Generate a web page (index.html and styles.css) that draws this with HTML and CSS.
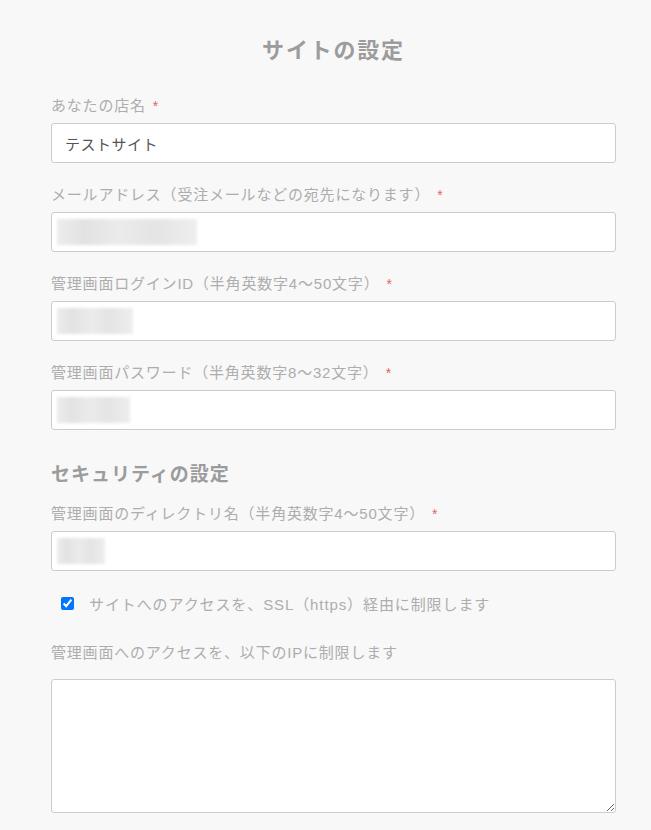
FILE: index.html
```html
<!DOCTYPE html>
<html lang="ja">
<head>
<meta charset="utf-8">
<title>サイトの設定</title>
<link rel="stylesheet" href="styles.css">
</head>
<body>
<main class="page">
  <h1 class="title">サイトの設定</h1>

  <div class="field">
    <label class="label">あなたの店名<span class="req">*</span></label>
    <input class="input" type="text" value="テストサイト">
  </div>

  <div class="field">
    <label class="label">メールアドレス（受注メールなどの宛先になります）<span class="req">*</span></label>
    <div class="input fake"><span class="blur blur-email"></span></div>
  </div>

  <div class="field">
    <label class="label">管理画面ログインID（半角英数字4〜50文字）<span class="req">*</span></label>
    <div class="input fake"><span class="blur blur-id"></span></div>
  </div>

  <div class="field">
    <label class="label">管理画面パスワード（半角英数字8〜32文字）<span class="req">*</span></label>
    <div class="input fake"><span class="blur blur-pw"></span></div>
  </div>

  <h2 class="section">セキュリティの設定</h2>

  <div class="field">
    <label class="label">管理画面のディレクトリ名（半角英数字4〜50文字）<span class="req">*</span></label>
    <div class="input fake"><span class="blur blur-dir"></span></div>
  </div>

  <label class="check-row">
    <input class="check" type="checkbox" checked>
    <span class="check-text">サイトへのアクセスを、SSL（https）経由に制限します</span>
  </label>

  <div class="field field-ip">
    <label class="label label-ip">管理画面へのアクセスを、以下のIPに制限します</label>
    <textarea class="textarea"></textarea>
  </div>
</main>
</body>
</html>
```
FILE: styles.css
```css
html, body {
  margin: 0;
  padding: 0;
  background: #f8f8f8;
}
body {
  font-family: "Liberation Sans", "Noto Sans CJK JP", sans-serif;
  color: #aaaaaa;
}
.page {
  width: 565px;
  margin: 0 0 0 51px;
  padding-top: 34px;
  display: flex;
  flex-direction: column;
}
.title {
  margin: 0 0 26px 0;
  text-align: center;
  font-size: 22px;
  line-height: 34px;
  font-weight: 700;
  color: #9c9c9c;
  letter-spacing: 1.8px;
}
.field {
  display: flex;
  flex-direction: column;
  margin-bottom: 20px;
}
.label {
  display: block;
  font-size: 15px;
  line-height: 24px;
  letter-spacing: 0.8px;
  color: #adadad;
  margin-bottom: 5px;
}
.req {
  color: #e06666;
  margin-left: 7px;
  font-size: 14px;
}
.input {
  box-sizing: border-box;
  width: 565px;
  height: 40px;
  border: 1px solid #c9cdd0;
  border-radius: 3px;
  background: #ffffff;
  font-family: "Liberation Sans", "Noto Sans CJK JP", sans-serif;
  font-size: 15px;
  color: #555555;
  padding: 0 13px;
  letter-spacing: 0.5px;
  outline: none;
}
.fake {
  display: flex;
  align-items: center;
  padding: 0 5px;
}
.blur {
  display: block;
  height: 26px;
  background: linear-gradient(90deg, #ececec, #e2e2e2 20%, #ebebeb 45%, #e4e4e4 70%, #eeeeee);
  filter: blur(1.5px);
}
.blur-email { width: 140px; }
.blur-id { width: 76px; }
.blur-pw { width: 73px; }
.blur-dir { width: 48px; }
.section {
  margin: 10px 0 12px 0;
  font-size: 19px;
  line-height: 30px;
  font-weight: 700;
  color: #9c9c9c;
  letter-spacing: 1px;
}
.check-row {
  display: flex;
  align-items: center;
  height: 24px;
  margin: 0 0 26px 10px;
}
.check {
  width: 13px;
  height: 13px;
  margin: 0 15px 0 0;
  accent-color: #0075ff;
}
.check-text {
  font-size: 15px;
  letter-spacing: 0.9px;
  color: #adadad;
}
.label-ip {
  margin-bottom: 14px;
}
.textarea {
  box-sizing: border-box;
  width: 565px;
  height: 134px;
  border: 1px solid #c9cdd0;
  border-radius: 3px;
  background: #ffffff;
  outline: none;
}
```
